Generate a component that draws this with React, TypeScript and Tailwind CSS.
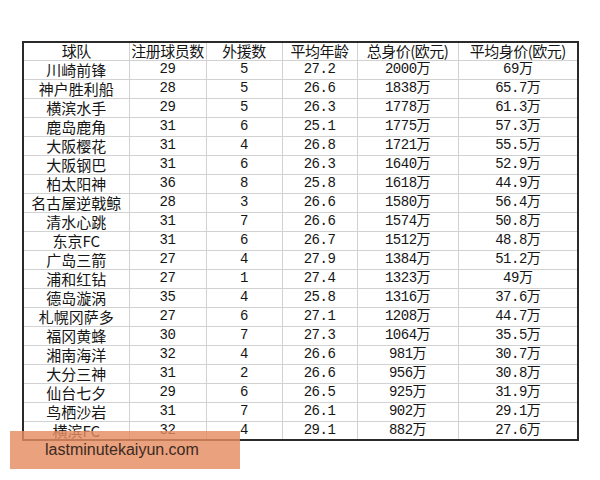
const headers = ['球队', '注册球员数', '外援数', '平均年龄', '总身价(欧元)', '平均身价(欧元)'];

const rows: [string, string, string, string, string, string][] = [
  ['川崎前锋', '29', '5', '27.2', '2000万', '69万'],
  ['神户胜利船', '28', '5', '26.6', '1838万', '65.7万'],
  ['横滨水手', '29', '5', '26.3', '1778万', '61.3万'],
  ['鹿岛鹿角', '31', '6', '25.1', '1775万', '57.3万'],
  ['大阪樱花', '31', '4', '26.8', '1721万', '55.5万'],
  ['大阪钢巴', '31', '6', '26.3', '1640万', '52.9万'],
  ['柏太阳神', '36', '8', '25.8', '1618万', '44.9万'],
  ['名古屋逆戟鲸', '28', '3', '26.6', '1580万', '56.4万'],
  ['清水心跳', '31', '7', '26.6', '1574万', '50.8万'],
  ['东京FC', '31', '6', '26.7', '1512万', '48.8万'],
  ['广岛三箭', '27', '4', '27.9', '1384万', '51.2万'],
  ['浦和红钻', '27', '1', '27.4', '1323万', '49万'],
  ['德岛漩涡', '35', '4', '25.8', '1316万', '37.6万'],
  ['札幌冈萨多', '27', '6', '27.1', '1208万', '44.7万'],
  ['福冈黄蜂', '30', '7', '27.3', '1064万', '35.5万'],
  ['湘南海洋', '32', '4', '26.6', '981万', '30.7万'],
  ['大分三神', '31', '2', '26.6', '956万', '30.8万'],
  ['仙台七夕', '29', '6', '26.5', '925万', '31.9万'],
  ['鸟栖沙岩', '31', '7', '26.1', '902万', '29.1万'],
  ['横滨FC', '32', '4', '29.1', '882万', '27.6万'],
];

const widths = ['w-[106px]', 'w-[77px]', 'w-[76px]', 'w-[75px]', 'w-[101px]', 'w-[120px]'];

export default function App() {
  return (
    <div className="relative w-[600px] h-[480px] bg-white pt-[41px] pl-[22px] text-[#151515]">
      <table className="table-fixed border-collapse border-2 border-[#2a2a2a] w-[555px]">
        <thead>
          <tr className="h-[18px]">
            {headers.map((h, i) => (
              <th
                key={h}
                className={`${widths[i]} p-0 border border-[#d2d2d2] text-center font-normal whitespace-nowrap text-[15px] leading-[16px] font-['Noto_Sans_CJK_SC',sans-serif] tracking-[-0.5px]`}
              >
                {h}
              </th>
            ))}
          </tr>
        </thead>
        <tbody>
          {rows.map((r) => (
            <tr key={r[0]} className="h-[19px]">
              <td className="p-0 border border-[#d2d2d2] text-center whitespace-nowrap text-[15px] leading-[17px] font-['Noto_Sans_CJK_SC',sans-serif]">
                {r[0]}
              </td>
              {r.slice(1).map((v, i) => (
                <td
                  key={i}
                  className="p-0 border border-[#d2d2d2] text-center whitespace-nowrap text-[14px] leading-[17px] tracking-[-0.5px] font-['Liberation_Mono','Noto_Sans_CJK_SC',monospace]"
                >
                  {v}
                </td>
              ))}
            </tr>
          ))}
        </tbody>
      </table>

      <div className="absolute left-[10px] top-[431px] w-[230px] h-[38px] bg-[rgba(228,140,98,0.82)] flex items-center pl-[35px]">
        <span className="text-[16px] text-[#3d2a22] font-['Liberation_Sans',Arial,sans-serif]">lastminutekaiyun.com</span>
      </div>
    </div>
  );
}
